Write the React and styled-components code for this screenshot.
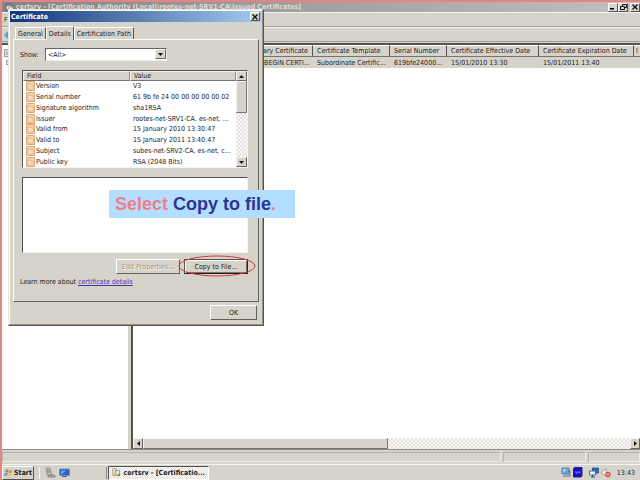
import React from "react";
import styled, { createGlobalStyle } from "styled-components";

const face = "#d6d3cb";

const GlobalStyle = createGlobalStyle`
  *, *::before, *::after {
    box-sizing: border-box;
  }
  body {
    margin: 0;
    background: #fff;
  }
  body, button, select, textarea {
    font-family: "DejaVu Sans Condensed", "DejaVu Sans", sans-serif;
    font-size: 7px;
    line-height: 10px;
    color: #222;
  }
`;

const Desktop = styled.div`
  position: relative;
  display: flex;
  flex-direction: column;
  min-height: 100vh;
  overflow: hidden;
  background: ${face};
  border-top: 2px solid #e38584;
  border-left: 2px solid #e38584;
`;

const TitleBar = styled.header`
  display: flex;
  align-items: center;
  height: 10px;
  padding-left: 3px;
  gap: 2px;
  background: linear-gradient(to right, #858383, #c2c0be);
`;

const Caption = styled.div`
  flex: 1;
  color: #dedbd5;
  font-weight: bold;
  white-space: nowrap;
`;

const CaptionButton = styled.button`
  display: flex;
  align-items: center;
  justify-content: center;
  width: 10px;
  height: 9px;
  padding: 0;
  background: ${face};
  border: 1px solid;
  border-color: #fff #55534f #55534f #fff;
`;

const CaptionButtons = styled.div`
  display: flex;
  ${CaptionButton}:last-child {
    margin-left: 2px;
  }
`;

const Bar = styled.div`
  display: flex;
  align-items: center;
  height: 15px;
  padding-left: 2px;
  border-top: 1px solid #f4f2ee;
  border-bottom: 1px solid #a19e98;
`;

const Panes = styled.main`
  display: flex;
  flex: 1;
  padding-top: 1px;
  gap: 2px;
`;

const Tree = styled.nav`
  width: 127px;
  padding: 4px 1px;
  background: #fff;
  border-top: 2px solid #55534f;
  border-right: 1px solid #d4d0c8;
`;

const ListPane = styled.section`
  flex: 1;
  min-width: 0;
  display: flex;
  flex-direction: column;
  background: #fff;
  border-top: 2px solid #55534f;
  border-left: 2px solid #55534f;
`;

const ListBody = styled.div`
  flex: 1;
  overflow: hidden;
`;

const CertTable = styled.table`
  width: 100%;
  table-layout: fixed;
  border-collapse: separate;
  border-spacing: 0;
  th,
  td {
    height: 11px;
    padding: 0 4px;
    text-align: left;
    font-weight: normal;
    white-space: nowrap;
    overflow: hidden;
    background: ${face};
  }
  th {
    border-bottom: 1px solid #77746f;
    border-right: 1px solid #55534f;
    border-top: 1px solid #fff;
  }
  th:last-child,
  td:last-child {
    padding: 0 0 0 2px;
    border-right: 0;
  }
`;

const Col = styled.col`
  width: ${({ $width }) => $width}px;
`;

const checker = "repeating-conic-gradient(#e4e2de 0 25%, #f9f8f7 0 50%)";

const ScrollBox = styled.div`
  display: flex;
  flex-direction: ${({ $vertical }) => ($vertical ? "column" : "row")};
  flex: none;
  width: ${({ $vertical }) => ($vertical ? "11px" : "auto")};
  height: ${({ $vertical }) => ($vertical ? "auto" : "11px")};
  background: ${checker} 0 0 / 4px 4px;
`;

const ScrollButton = styled.button`
  display: flex;
  align-items: center;
  justify-content: center;
  flex: none;
  width: ${({ $vertical }) => ($vertical ? "11px" : "10px")};
  height: ${({ $vertical }) => ($vertical ? "10px" : "11px")};
  padding: 0;
  background: ${face};
  border: 1px solid;
  border-color: #f6f4f0 #66635e #66635e #f6f4f0;
`;

const Thumb = styled.div`
  flex: ${({ $part }) => $part};
  background: ${face};
  border: 1px solid;
  border-color: #f6f4f0 #77746f #77746f #f6f4f0;
`;

const Track = styled.div`
  flex: ${({ $part }) => $part};
`;

const StatusBar = styled.div`
  display: grid;
  grid-template-columns: 1fr 83px 52px;
  gap: 2px;
  height: 15px;
  padding: 2px 0;
  border-top: 1px solid #8f8c87;
`;

const StatusCell = styled.div`
  border: 1px solid;
  border-color: #b5b2ac #efede8 #efede8 #b5b2ac;
`;

const TaskBar = styled.footer`
  display: flex;
  align-items: center;
  height: 16px;
  padding-right: 5px;
  border-top: 1px solid #f6f4f0;
`;

const StartButton = styled.button`
  display: flex;
  align-items: center;
  gap: 1px;
  width: 32px;
  height: 14px;
  padding: 0 1px;
  font-weight: bold;
  background: ${face};
  border: 1px solid;
  border-color: #fff #55534f #55534f #fff;
`;

const QuickLaunch = styled.div`
  display: flex;
  align-items: center;
  gap: 3px;
  width: 68px;
  height: 12px;
  margin-left: 5px;
  padding-left: 5px;
  border-left: 1px solid #f6f4f0;
  border-right: 1px solid #8f8c87;
`;

const TaskButton = styled.button`
  display: flex;
  align-items: center;
  gap: 3px;
  width: 101px;
  height: 14px;
  margin-left: 1px;
  padding: 0 3px;
  font-weight: bold;
  white-space: nowrap;
  background: ${checker} 0 0 / 2px 2px;
  border: 1px solid;
  border-color: #55534f #fff #fff #55534f;
`;

const Tray = styled.div`
  display: flex;
  align-items: center;
  gap: 6px;
  margin-left: auto;
`;

const TrayGroup = styled.div`
  display: flex;
  gap: 2px;
`;

const Dialog = styled.section`
  position: absolute;
  top: 7px;
  left: 6px;
  width: 256px;
  height: 317px;
  display: flex;
  flex-direction: column;
  padding: 1px;
  background: ${face};
  border: 1px solid;
  border-color: #e6e3dd #55534f #55534f #e6e3dd;
  box-shadow: inset -1px -1px #96938d, inset 1px 1px #fff;
`;

const DialogTitle = styled.header`
  display: flex;
  align-items: center;
  justify-content: space-between;
  height: 11px;
  padding: 0 2px 0 1px;
  font-weight: bold;
  color: #fff;
  background: linear-gradient(to right, #103478, #a6caf0);
`;

const Tabs = styled.div`
  display: flex;
  align-items: flex-end;
  height: 17px;
  padding-left: 5px;
`;

const Tab = styled.button`
  position: relative;
  flex: none;
  height: ${({ $selected }) => ($selected ? "14px" : "12px")};
  margin-bottom: ${({ $selected }) => ($selected ? "-1px" : "0")};
  padding: 0 2px;
  white-space: nowrap;
  background: ${face};
  border: 1px solid;
  border-color: #fff #55534f transparent #fff;
  border-bottom: 0;
  border-radius: 1px 1px 0 0;
`;

const TabPanel = styled.div`
  display: flex;
  flex-direction: column;
  flex: 1;
  margin: 0 3px;
  padding: 8px 10px 0 8px;
  border: 1px solid;
  border-color: #fff #66635e #66635e #fff;
`;

const ShowRow = styled.div`
  display: flex;
  align-items: center;
  height: 13px;
  margin-left: -2px;
  label {
    width: 25px;
  }
`;

const ComboBox = styled.div`
  display: flex;
  width: 122px;
  height: 13px;
  background: #fff;
  border: 1px solid;
  border-color: #66635e #efede8 #efede8 #66635e;
  select {
    flex: 1;
    appearance: none;
    padding: 0 2px;
    background: #fff;
    border: 0;
  }
`;

const ListBox = styled.div`
  display: flex;
  height: 98px;
  margin-top: 9px;
  background: #fff;
  border: 1px solid;
  border-color: #55534f #f6f4f0 #f6f4f0 #55534f;
`;

const FieldTable = styled.table`
  flex: 1;
  height: 96px;
  table-layout: fixed;
  border-collapse: separate;
  border-spacing: 0;
  th,
  td {
    padding: 0 3px;
    text-align: left;
    font-weight: normal;
    white-space: nowrap;
    overflow: hidden;
  }
  th {
    height: 10px;
    line-height: 8px;
    background: ${face};
    border: 1px solid;
    border-color: #f6f4f0 #96938d #77746f #f6f4f0;
  }
  td:last-child {
    padding-right: 0;
  }
`;

const FieldName = styled.div`
  display: flex;
  align-items: center;
  gap: 1px;
`;

const Details = styled.textarea`
  height: 76px;
  margin-top: 9px;
  background: #fff;
  border: 1px solid;
  border-color: #55534f #f6f4f0 #f6f4f0 #55534f;
  outline: 0;
  resize: none;
`;

const ButtonRow = styled.div`
  display: flex;
  justify-content: flex-end;
  gap: 4px;
  margin-top: 6px;
`;

const PushButton = styled.button`
  width: ${({ $small }) => ($small ? "47px" : "64px")};
  height: 15px;
  padding: 0;
  background: ${face};
  border: 1px solid;
  border-color: #fff #66635e #66635e #fff;
  ${({ $default }) =>
    $default &&
    `
    border-color: #55534f #222 #222 #55534f;
    box-shadow: inset 1px 1px #fff, inset -1px -1px #77746f;
  `}
  &:disabled {
    color: #96938d;
    text-shadow: 1px 1px #fff;
  }
`;

const Circled = styled.div`
  position: relative;
  svg {
    position: absolute;
    top: -4px;
    left: -6px;
    pointer-events: none;
  }
`;

const LearnMore = styled.p`
  margin: 3px 0 0 -2px;
  a {
    color: #3d35b5;
  }
`;

const DialogFooter = styled.footer`
  display: flex;
  justify-content: flex-end;
  padding: 3px 5px 4px;
`;

const Callout = styled.div`
  position: absolute;
  top: 188px;
  left: 107px;
  width: 186px;
  padding: 0 6px;
  font: bold 18px/28px "Liberation Sans", sans-serif;
  white-space: nowrap;
  color: #f08088;
  background: #b4deff;
  strong {
    color: #2b3595;
  }
`;

const arrows = {
  up: "M0 4h5L2.500 1z",
  down: "M0 1h5L2.500 4z",
  left: "M4 0v5L1 2.500z",
  right: "M1 0v5L4 2.500z"
};

const Arrow = ({ to }) => (
  <svg width="5" height="5" viewBox="0 0 5 5" fill="#111">
    <path d={arrows[to]} />
  </svg>
);

const CloseIcon = () => (
  <svg width="6" height="6" viewBox="0 0 6 6" stroke="#111" strokeWidth="1.300">
    <path d="M.5.5l5 5M5.500.5l-5 5" />
  </svg>
);

const ConsoleIcon = () => (
  <svg width="9" height="9" viewBox="0 0 9 9">
    <path d="M1 1h6v6H1z" fill="#e9e2b8" stroke="#5d5b60" />
    <path d="M1 1h6v2H1z" fill="#7180a5" />
    <path d="M4 4h4v4H4z" fill="#f4f3ee" stroke="#8b7b5a" strokeWidth=".7" />
  </svg>
);

const FieldIcon = () => (
  <svg width="9" height="10" viewBox="0 0 9 10">
    <path d="M.5.5h8v9h-8z" fill="#f5d3ac" stroke="#dea878" />
    <path d="M2 3h2v1h3v4H2z" fill="#fff4e4" stroke="#d4965e" strokeWidth=".6" />
    <path d="M3 6h3" stroke="#d4965e" strokeWidth=".6" />
  </svg>
);

const StartIcon = () => (
  <svg width="10" height="10" viewBox="0 0 10 10">
    <path d="M2 1.500q2-1 3 0L4.300 4.500q-1-1-3 0z" fill="#e8703a" />
    <path d="M5.700 1.700q1.500 1 3.300 0l-.8 3q-1.700 1-3.200 0z" fill="#83b84c" />
    <path d="M1 5.300q2-1 3 0L3.300 8.300q-1-1-3 0z" fill="#4d9be0" />
    <path d="M4.800 5.500q1.500 1 3.200 0l-.8 3q-1.700 1-3.200 0z" fill="#f2c63c" />
  </svg>
);

const ServerIcon = () => (
  <svg width="11" height="11" viewBox="0 0 11 11">
    <path d="M1 1h4l2 7H2z" fill="#c9c8c6" stroke="#85837f" strokeWidth=".7" />
    <path d="M2 3h3M2 5h4" stroke="#6a6865" strokeWidth=".8" />
    <path d="M3 8h6l1.500 2H3z" fill="#b3b1ad" stroke="#74726e" strokeWidth=".7" />
  </svg>
);

const DesktopIcon = () => (
  <svg width="11" height="10" viewBox="0 0 11 10">
    <path d="M.5 1h10v6.500H.5z" fill="#2d66c2" stroke="#6f8fb8" strokeWidth=".8" />
    <path d="M2 2.500h5L3 6H2z" fill="#6da4e8" />
    <path d="M3 8.500h5" stroke="#456894" />
  </svg>
);

const CertIcon = () => (
  <svg width="10" height="11" viewBox="0 0 10 11">
    <path d="M1 1h4v8H1z" fill="#f4ecc4" stroke="#77746f" strokeWidth=".7" />
    <path d="M4 3h5v6H4z" fill="#dce6f2" stroke="#55708e" strokeWidth=".7" />
    <circle cx="4" cy="8" r="1.800" fill="#e2b43a" />
    <circle cx="8" cy="8.500" r="1.500" fill="#51a350" />
  </svg>
);

const ComputerIcon = () => (
  <svg width="10" height="11" viewBox="0 0 10 11">
    <path d="M1 1h7v6H1z" fill="#62a8dc" stroke="#56718c" strokeWidth=".8" />
    <path d="M2 2h4L2 6z" fill="#a5d4f4" />
    <path d="M2 9h7M7 4h2v5" stroke="#56718c" fill="none" />
  </svg>
);

const VmIcon = () => (
  <svg width="10" height="11" viewBox="0 0 10 11">
    <path d="M1.500.5H9v8L8 10H.5V2z" fill="#1710c8" stroke="#1b237e" />
    <path d="M2.500 4.500l1 2 1-2M5 6.500v-2l1 1 1-1v2" stroke="#8aa4ff" strokeWidth=".7" fill="none" />
  </svg>
);

const NetworkIcon = () => (
  <svg width="10" height="11" viewBox="0 0 10 11">
    <path d="M3.500 1h6v5h-6z" fill="#2670b9" stroke="#1c507f" strokeWidth=".8" />
    <path d="M.5 4h6v4h-6z" fill="#e7f5ff" stroke="#1c507f" strokeWidth=".8" />
    <path d="M2 10h4M3.500 8v2" stroke="#1c507f" />
  </svg>
);

const MutedIcon = () => (
  <svg width="10" height="11" viewBox="0 0 10 11">
    <path d="M1 4h1.500L5 1v8L2.500 7H1z" fill="#fff" stroke="#85837f" strokeWidth=".7" />
    <circle cx="7" cy="7.500" r="2.700" fill="#dc4747" />
    <path d="M5.800 6.300l2.400 2.400M8.200 6.300L5.800 8.700" stroke="#fff" strokeWidth=".8" />
  </svg>
);

const certColumns = [
  ["Request ID", 53, "2"],
  ["Requester", 63, "SRV2"],
  ["Binary Certificate", 64, "-----BEGIN CERTI..."],
  ["Certificate Template", 77, "Subordinate Certific..."],
  ["Serial Number", 57, "619bfe24000..."],
  ["Certificate Effective Date", 92, "15/01/2010 13:30"],
  ["Certificate Expiration Date", 95, "15/01/2011 13:40"]
];

const fields = [
  ["Version", "V3"],
  ["Serial number", "61 9b fe 24 00 00 00 00 00 02"],
  ["Signature algorithm", "sha1RSA"],
  ["Issuer", "rootes-net-SRV1-CA, es-net, ..."],
  ["Valid from", "15 January 2010 13:30:47"],
  ["Valid to", "15 January 2011 13:40:47"],
  ["Subject", "subes-net-SRV2-CA, es-net, c..."],
  ["Public key", "RSA (2048 Bits)"]
];

const Certificates = () => (
  <CertTable>
    <colgroup>
      {certColumns.map(([name, width]) => (
        <Col key={name} $width={width} />
      ))}
      <col />
    </colgroup>
    <thead>
      <tr>
        {certColumns.map(([name]) => (
          <th key={name}>{name}</th>
        ))}
        <th>I</th>
      </tr>
    </thead>
    <tbody>
      <tr>
        {certColumns.map(([name, , value]) => (
          <td key={name}>{value}</td>
        ))}
        <td />
      </tr>
    </tbody>
  </CertTable>
);

const CertificateDialog = () => (
  <Dialog role="dialog" aria-label="Certificate">
    <DialogTitle>
      Certificate
      <CaptionButton aria-label="Close">
        <CloseIcon />
      </CaptionButton>
    </DialogTitle>
    <Tabs role="tablist">
      <Tab role="tab">General</Tab>
      <Tab role="tab" aria-selected="true" $selected>
        Details
      </Tab>
      <Tab role="tab">Certification Path</Tab>
    </Tabs>
    <TabPanel>
      <ShowRow>
        <label htmlFor="show">Show:</label>
        <ComboBox>
          <select id="show">
            <option>&lt;All&gt;</option>
          </select>
          <ScrollButton as="span" $vertical>
            <Arrow to="down" />
          </ScrollButton>
        </ComboBox>
      </ShowRow>
      <ListBox>
        <FieldTable>
          <colgroup>
            <Col $width={107} />
            <col />
          </colgroup>
          <thead>
            <tr>
              <th>Field</th>
              <th>Value</th>
            </tr>
          </thead>
          <tbody>
            {fields.map(([name, value]) => (
              <tr key={name}>
                <td>
                  <FieldName>
                    <FieldIcon />
                    {name}
                  </FieldName>
                </td>
                <td>{value}</td>
              </tr>
            ))}
          </tbody>
        </FieldTable>
        <ScrollBox $vertical>
          <ScrollButton $vertical aria-label="Scroll up">
            <Arrow to="up" />
          </ScrollButton>
          <Thumb $part={31} />
          <Track $part={45} />
          <ScrollButton $vertical aria-label="Scroll down">
            <Arrow to="down" />
          </ScrollButton>
        </ScrollBox>
      </ListBox>
      <Details aria-label="Field details" readOnly />
      <ButtonRow>
        <PushButton disabled>Edit Properties...</PushButton>
        <Circled>
          <PushButton $default>Copy to File...</PushButton>
          <svg width="78" height="22" viewBox="0 0 78 22" fill="none" stroke="#d9333d">
            <ellipse cx="39" cy="11" rx="38" ry="10" />
          </svg>
        </Circled>
      </ButtonRow>
      <LearnMore>
        Learn more about <a href="#details">certificate details</a>
      </LearnMore>
    </TabPanel>
    <DialogFooter>
      <PushButton $small>OK</PushButton>
    </DialogFooter>
  </Dialog>
);

const App = () => (
  <>
    <GlobalStyle />
    <Desktop>
      <TitleBar>
        <ConsoleIcon />
        <Caption>
          certsrv - [Certification Authority (Local)\rootes-net-SRV1-CA\Issued
          Certificates]
        </Caption>
        <CaptionButtons>
          <CaptionButton aria-label="Minimize">
            <svg width="6" height="6" viewBox="0 0 6 6">
              <path d="M0 4h4v1.500H0z" />
            </svg>
          </CaptionButton>
          <CaptionButton aria-label="Restore">
            <svg width="7" height="6" viewBox="0 0 7 6" fill="none" stroke="#111">
              <path d="M2.500 2V.5h4v3H5M.5 2.500h4v3h-4z" />
            </svg>
          </CaptionButton>
          <CaptionButton aria-label="Close">
            <CloseIcon />
          </CaptionButton>
        </CaptionButtons>
      </TitleBar>
      <Bar>F</Bar>
      <Bar>
        <svg width="12" height="12" viewBox="0 0 12 12">
          <path d="M0 6L6 0v3h6v6H6v3z" fill="#3fa5df" />
        </svg>
      </Bar>
      <Panes>
        <Tree>
          <svg width="8" height="20" viewBox="0 0 8 20" fill="#e7e5e0" stroke="#9b9893">
            <path d="M1.500.5h5v7h-5zM3 3h2M3 5h2M3.500 11.500h4v4h-4z" />
          </svg>
        </Tree>
        <ListPane>
          <ListBody>
            <Certificates />
          </ListBody>
          <ScrollBox>
            <ScrollButton aria-label="Scroll left">
              <Arrow to="left" />
            </ScrollButton>
            <Thumb $part={1} />
            <Track $part={1} />
            <ScrollButton aria-label="Scroll right">
              <Arrow to="right" />
            </ScrollButton>
          </ScrollBox>
        </ListPane>
      </Panes>
      <StatusBar>
        <StatusCell />
        <StatusCell />
        <StatusCell />
      </StatusBar>
      <TaskBar>
        <StartButton>
          <StartIcon />
          Start
        </StartButton>
        <QuickLaunch>
          <ServerIcon />
          <DesktopIcon />
        </QuickLaunch>
        <TaskButton>
          <CertIcon />
          certsrv - [Certificatio...
        </TaskButton>
        <Tray>
          <TrayGroup>
            <ComputerIcon />
            <VmIcon />
          </TrayGroup>
          <TrayGroup>
            <NetworkIcon />
            <MutedIcon />
          </TrayGroup>
          <time>13:43</time>
        </Tray>
      </TaskBar>
      <CertificateDialog />
      <Callout>
        Select <strong>Copy to file</strong>.
      </Callout>
    </Desktop>
  </>
);

export default App;
